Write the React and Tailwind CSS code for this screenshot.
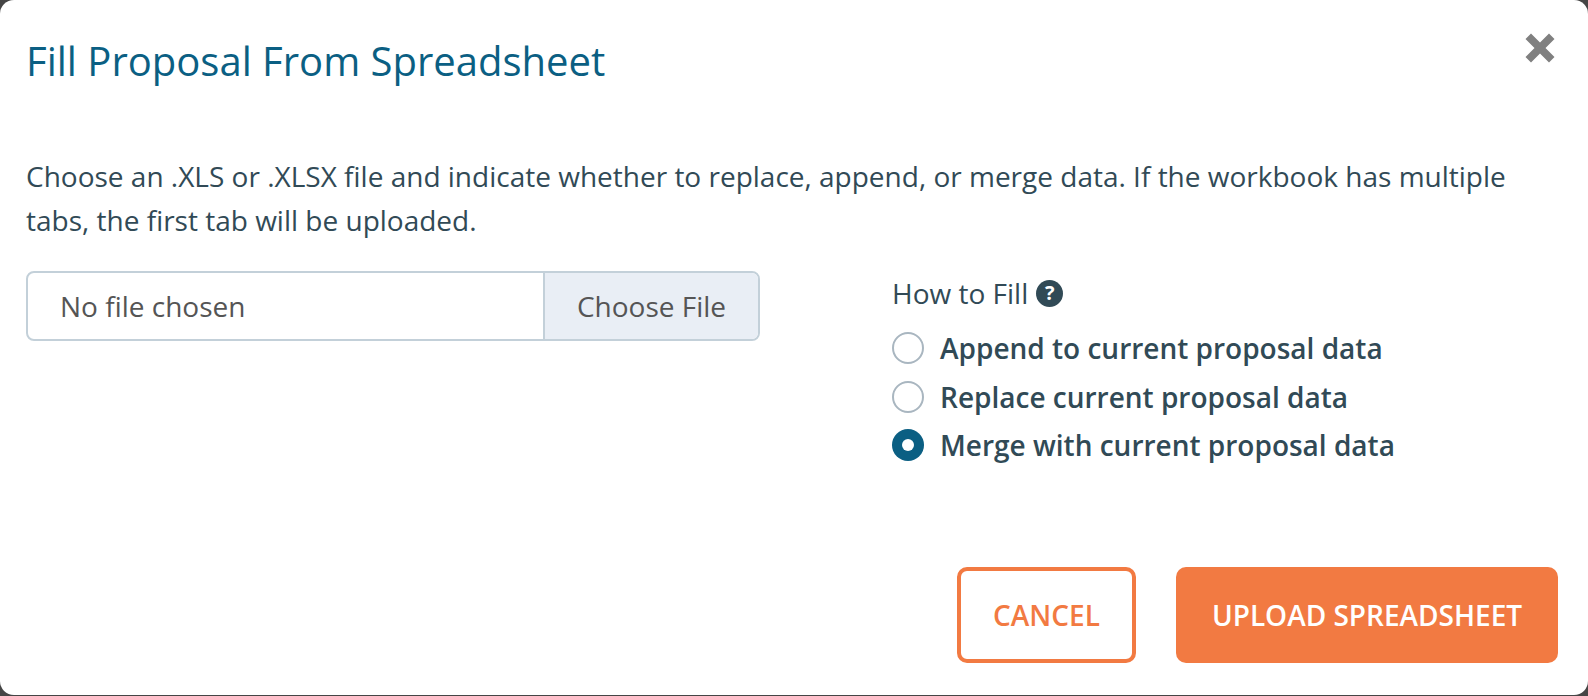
import React from 'react'

const options = [
  { label: 'Append to current proposal data', checked: false },
  { label: 'Replace current proposal data', checked: false },
  { label: 'Merge with current proposal data', checked: true },
]

function Radio({ checked }) {
  if (checked) {
    return (
      <span className="flex h-[32px] w-[32px] shrink-0 items-center justify-center rounded-full bg-[#0b5f83]">
        <span className="h-[12px] w-[12px] rounded-full bg-white" />
      </span>
    )
  }
  return <span className="h-[32px] w-[32px] shrink-0 rounded-full border-2 border-[#a9b6c0] bg-white" />
}

export default function App() {
  return (
    <div className="h-[696px] w-[1588px] overflow-hidden bg-[#454545] font-['Open_Sans','Noto_Sans',sans-serif]">
      <div className="flex h-[695px] flex-col rounded-[14px] bg-white pl-[26px] pr-[30px]">
        <div className="flex items-start justify-between pt-[36px]">
          <h1 className="text-[40px] leading-[50px] font-normal text-[#0b5f83]">Fill Proposal From Spreadsheet</h1>
          <button className="mt-[-3px] mr-[3px] text-[#808080]">
            <svg width="30" height="30" viewBox="0 0 30 30">
              <path d="M6 0.5 L15 9.5 L24 0.5 L29.5 6 L20.5 15 L29.5 24 L24 29.5 L15 20.5 L6 29.5 L0.5 24 L9.5 15 L0.5 6 Z" fill="currentColor" />
            </svg>
          </button>
        </div>

        <p className="mt-[68px] w-[1510px] text-[28px] leading-[44px] text-[#314a56]">
          Choose an .XLS or .XLSX file and indicate whether to replace, append, or merge data. If the workbook has multiple tabs, the first tab will be uploaded.
        </p>

        <div className="mt-[29px] flex items-start">
          <div className="flex h-[70px] w-[734px] overflow-hidden rounded-[8px] border-2 border-[#c3d0d9] text-[28px] text-[#555555]">
            <div className="flex flex-1 items-center pl-[32px]">No file chosen</div>
            <div className="flex w-[215px] items-center justify-center border-l-2 border-[#c3d0d9] bg-[#e9eef5]">Choose File</div>
          </div>
          <div className="ml-[132px]">
            <div className="flex h-[44px] items-center gap-[8px] text-[28px] text-[#314a56]">
              How to Fill
              <span className="flex h-[27px] w-[27px] items-center justify-center rounded-full bg-[#314a56] text-[20px] font-bold text-white">?</span>
            </div>
            <div className="mt-[17px] flex flex-col gap-[16.5px]">
              {options.map((o) => (
                <label key={o.label} className="flex h-[32px] items-center gap-[16px] text-[28px] font-semibold text-[#314a56]">
                  <Radio checked={o.checked} />
                  {o.label}
                </label>
              ))}
            </div>
          </div>
        </div>

        <div className="mt-auto mb-[32px] flex justify-end gap-[40px]">
          <button className="h-[96px] w-[179px] rounded-[10px] border-4 border-[#f27a42] bg-white text-[28px] font-semibold text-[#f27a42]">CANCEL</button>
          <button className="h-[96px] w-[382px] rounded-[10px] bg-[#f27a42] text-[28px] font-semibold text-white">UPLOAD SPREADSHEET</button>
        </div>
      </div>
    </div>
  )
}
